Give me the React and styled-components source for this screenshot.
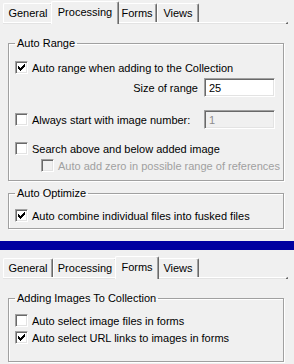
import React from 'react';
import styled, { createGlobalStyle } from 'styled-components';

const Global = createGlobalStyle`
  html, body { margin: 0; padding: 0; background: #f0f0f0; }
  body {
    font-family: "Liberation Sans", Arial, sans-serif;
    font-size: 11px;
    color: #000;
    width: 294px;
    height: 364px;
    overflow: hidden;
  }
  * { box-sizing: border-box; }
`;

const Screen = styled.div`
  display: flex;
  flex-direction: column;
  width: 294px;
`;

const TabStrip = styled.div`
  display: flex;
  align-items: flex-end;
  padding-left: 3px;
  height: 21px;
  margin-top: ${p => p.$top}px;
`;

const Tab = styled.div`
  flex: none;
  width: ${p => p.$w + (p.$active ? 4 : 0)}px;
  height: ${p => (p.$active ? 23 : 19)}px;
  margin: 0 ${p => (p.$active ? -2 : 0)}px ${p => (p.$active ? -2 : 0)}px;
  position: relative;
  z-index: ${p => (p.$active ? 2 : 1)};
  background: #f0f0f0;
  border-left: 1px solid #fff;
  border-top: 1px solid #fff;
  border-right: 1px solid #696969;
  box-shadow: inset -1px 0 0 #a0a0a0;
  border-top-left-radius: 2px;
  border-top-right-radius: 2px;
  display: flex;
  align-items: center;
  justify-content: center;
  padding-bottom: ${p => (p.$active ? 3 : 0)}px;
  white-space: nowrap;
`;

const TabLine = styled.div`
  margin-left: 3px;
  width: 285px;
  height: 2px;
  border-top: 1px solid #fff;
  border-right: 2px solid #696969;
  background: #e3e3e3;
`;

const Group = styled.fieldset`
  margin: ${p => p.$top}px 10px 0 8px;
  min-width: 0;
  padding: 0 8px ${p => p.$bottom}px 6px;
  border: 1px solid #a0a0a0;
  border-radius: 0;
  box-shadow: 1px 1px 0 #fff, inset 1px 1px 0 #fff;
  display: flex;
  flex-direction: column;
`;

const Legend = styled.legend`
  padding: 0 2px;
  margin-left: 0;
  line-height: 13px;
  height: 13px;
`;

const Row = styled.div`
  display: flex;
  align-items: center;
  gap: 4px;
  height: ${p => p.$h || 13}px;
  margin-top: ${p => p.$mt}px;
  padding-left: ${p => p.$indent || 0}px;
  white-space: nowrap;
  color: ${p => (p.$disabled ? '#a0a0a0' : '#000')};
`;

const FieldRow = styled.div`
  display: flex;
  align-items: center;
  justify-content: flex-end;
  gap: 6px;
  height: 19px;
  margin-top: ${p => p.$mt}px;
  white-space: nowrap;
`;

const Spacer = styled.div`
  flex: 1;
`;

const Box = styled.span`
  flex: none;
  width: 13px;
  height: 13px;
  border-top: 1px solid #a0a0a0;
  border-left: 1px solid #a0a0a0;
  border-right: 1px solid #fff;
  border-bottom: 1px solid #fff;
  box-shadow: inset 1px 1px 0 #696969, inset -1px -1px 0 #e3e3e3;
  background: ${p => (p.$disabled ? '#f0f0f0' : '#fff')};
  display: flex;
  align-items: center;
  justify-content: center;
`;

const TextBox = styled.input`
  flex: none;
  width: 71px;
  height: 19px;
  margin: 0;
  padding: 0 0 0 4px;
  font: inherit;
  font-size: 11px;
  color: ${p => (p.disabled ? '#8d8d8d' : '#000')};
  background: ${p => (p.disabled ? '#f0f0f0' : '#fff')};
  border-top: 1px solid #a0a0a0;
  border-left: 1px solid #a0a0a0;
  border-right: 1px solid #fff;
  border-bottom: 1px solid #fff;
  box-shadow: inset 1px 1px 0 #696969, inset -1px -1px 0 #e3e3e3;
  outline: none;
`;

const BlueBar = styled.div`
  height: 9px;
  margin-top: 12px;
  background: #0000a0;
`;

const Check = () => (
  <svg width="7" height="7" viewBox="0 0 7 7" shapeRendering="crispEdges">
    <path
      fill="#000"
      d="M6 0h1v1h-1z M5 1h2v1h-2z M0 2h1v1h-1z M4 2h3v1h-3z M0 3h2v1h-2z M3 3h3v1h-3z M0 4h5v1h-5z M1 5h3v1h-3z M2 6h1v1h-1z"
    />
  </svg>
);

const CheckBox = ({ checked, disabled }) => (
  <Box $disabled={disabled}>{checked && <Check />}</Box>
);

const TABS = [
  ['General', 50],
  ['Processing', 64],
  ['Forms', 40],
  ['Views', 42],
];

const Tabs = ({ active, top }) => (
  <>
    <TabStrip $top={top}>
      {TABS.map(([name, w]) => (
        <Tab key={name} $w={w} $active={name === active}>
          {name}
        </Tab>
      ))}
    </TabStrip>
    <TabLine />
  </>
);

export default function App() {
  return (
    <Screen>
      <Global />
      <Tabs active="Processing" top={1} />
      <Group $top={13} $bottom={8}>
        <Legend>Auto Range</Legend>
        <Row $mt={11}>
          <CheckBox checked />
          <span>Auto range when adding to the Collection</span>
        </Row>
        <FieldRow $mt={4}>
          <span>Size of range</span>
          <TextBox defaultValue="25" />
        </FieldRow>
        <Row $mt={13} $h={19}>
          <CheckBox />
          <span>Always start with image number:</span>
          <Spacer />
          <TextBox defaultValue="1" disabled />
        </Row>
        <Row $mt={13}>
          <CheckBox />
          <span>Search above and below added image</span>
        </Row>
        <Row $mt={4} $indent={26} $disabled>
          <CheckBox disabled />
          <span>Auto add zero in possible range of references</span>
        </Row>
      </Group>
      <Group $top={6} $bottom={6}>
        <Legend>Auto Optimize</Legend>
        <Row $mt={9}>
          <CheckBox checked />
          <span>Auto combine individual files into fusked files</span>
        </Row>
      </Group>
      <BlueBar />
      <Tabs active="Forms" top={6} />
      <Group $top={13} $bottom={17}>
        <Legend>Adding Images To Collection</Legend>
        <Row $mt={9}>
          <CheckBox />
          <span>Auto select image files in forms</span>
        </Row>
        <Row $mt={4}>
          <CheckBox checked />
          <span>Auto select URL links to images in forms</span>
        </Row>
      </Group>
    </Screen>
  );
}
